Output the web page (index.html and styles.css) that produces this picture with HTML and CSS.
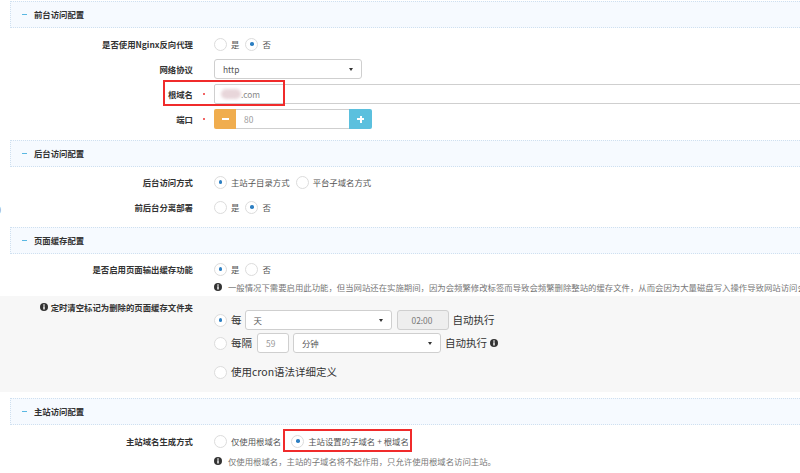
FILE: index.html
```html
<!DOCTYPE html>
<html lang="zh-CN">
<head>
<meta charset="utf-8">
<title>配置</title>
<link rel="stylesheet" href="styles.css">
</head>
<body>
<div class="page">

  <div class="head"><span class="dash"></span>前台访问配置</div>
  <div class="rows s1">
    <div class="row">
      <div class="label"><span>是否使用Nginx反向代理</span><span class="req"></span></div>
      <div class="ctrl">
        <span class="opt"><span class="radio"></span>是</span>
        <span class="opt"><span class="radio on"></span>否</span>
      </div>
    </div>
    <div class="row">
      <div class="label"><span>网络协议</span><span class="req"></span></div>
      <div class="ctrl">
        <div class="select w148"><span>http</span><span class="caret"></span></div>
      </div>
    </div>
    <div class="row">
      <div class="label"><span>根域名</span><span class="req dot"></span></div>
      <div class="ctrl">
        <div class="input wide"><span class="blur"></span><span class="val">.com</span></div>
      </div>
    </div>
    <div class="row">
      <div class="label"><span>端口</span><span class="req dot"></span></div>
      <div class="ctrl">
        <div class="spinner">
          <span class="btn minus"><span class="bar"></span></span>
          <span class="spin-input">80</span>
          <span class="btn plus"><span class="bar"></span><span class="bar v"></span></span>
        </div>
      </div>
    </div>
  </div>

  <div class="head"><span class="dash"></span>后台访问配置</div>
  <div class="rows s2">
    <div class="row">
      <div class="label"><span>后台访问方式</span><span class="req"></span></div>
      <div class="ctrl">
        <span class="opt"><span class="radio on"></span>主站子目录方式</span>
        <span class="opt"><span class="radio"></span>平台子域名方式</span>
      </div>
    </div>
    <div class="row">
      <div class="label"><span>前后台分离部署</span><span class="req"></span></div>
      <div class="ctrl">
        <span class="opt"><span class="radio"></span>是</span>
        <span class="opt"><span class="radio on"></span>否</span>
      </div>
    </div>
  </div>

  <div class="head"><span class="dash"></span>页面缓存配置</div>
  <div class="rows s3">
    <div class="row">
      <div class="label"><span>是否启用页面输出缓存功能</span><span class="req"></span></div>
      <div class="ctrl">
        <span class="opt"><span class="radio on"></span>是</span>
        <span class="opt"><span class="radio"></span>否</span>
      </div>
    </div>
    <div class="help">
      <svg class="info" viewBox="0 0 10 10"><circle cx="5" cy="5" r="5" fill="#333"/><circle cx="5" cy="2.6" r="1" fill="#fff"/><rect x="4.1" y="4.1" width="1.8" height="4" fill="#fff"/></svg>
      <span>一般情况下需要启用此功能，但当网站还在实施期间，因为会频繁修改标签而导致会频繁删除整站的缓存文件，从而会因为大量磁盘写入操作导致网站访问会比较缓慢。</span>
    </div>
  </div>

  <div class="gray">
    <div class="label top">
      <span class="lbl-i"><svg class="info" viewBox="0 0 10 10"><circle cx="5" cy="5" r="5" fill="#333"/><circle cx="5" cy="2.6" r="1" fill="#fff"/><rect x="4.1" y="4.1" width="1.8" height="4" fill="#fff"/></svg>定时清空标记为删除的页面缓存文件夹</span><span class="req"></span>
    </div>
    <div class="sched">
      <div class="srow">
        <span class="radio on"></span>
        <span class="big t1">每</span>
        <div class="select w147"><span>天</span><span class="caret"></span></div>
        <span class="time">02:00</span>
        <span class="big">自动执行</span>
      </div>
      <div class="srow r2">
        <span class="radio"></span>
        <span class="big t1">每隔</span>
        <span class="num">59</span>
        <div class="select w148 ml4"><span>分钟</span><span class="caret"></span></div>
        <span class="big">自动执行</span>
        <svg class="info big-i" viewBox="0 0 10 10"><circle cx="5" cy="5" r="5" fill="#333"/><circle cx="5" cy="2.6" r="1" fill="#fff"/><rect x="4.1" y="4.1" width="1.8" height="4" fill="#fff"/></svg>
      </div>
      <div class="srow r3">
        <span class="radio"></span>
        <span class="big t1">使用cron语法详细定义</span>
      </div>
    </div>
  </div>

  <div class="head"><span class="dash"></span>主站访问配置</div>
  <div class="rows s4">
    <div class="row">
      <div class="label"><span>主站域名生成方式</span><span class="req"></span></div>
      <div class="ctrl">
        <span class="opt"><span class="radio"></span>仅使用根域名</span>
        <span class="opt o2"><span class="radio on"></span>主站设置的子域名 + 根域名</span>
      </div>
    </div>
    <div class="help">
      <svg class="info" viewBox="0 0 10 10"><circle cx="5" cy="5" r="5" fill="#333"/><circle cx="5" cy="2.6" r="1" fill="#fff"/><rect x="4.1" y="4.1" width="1.8" height="4" fill="#fff"/></svg>
      <span>仅使用根域名，主站的子域名将不起作用，只允许使用根域名访问主站。</span>
    </div>
  </div>
</div>

<span class="edge">0</span>
<div class="mark m1"></div>
<div class="mark m2"></div>
</body>
</html>
```

FILE: styles.css
```css
* { box-sizing: border-box; }

html, body {
  margin: 0;
  width: 800px;
  height: 473px;
  overflow: hidden;
}

body {
  position: relative;
  background: #fff;
  color: #333;
  font-family: "Noto Sans CJK SC", "Noto Sans", sans-serif;
  font-size: 8.4px;
  line-height: 1.2;
}

.page {
  width: 1100px;
  padding-top: 1px;
}

.head {
  margin-left: 10px;
  height: 27px;
  background: #f6faff;
  border: 1px dotted #cfe0f0;
  border-right: none;
  display: flex;
  align-items: center;
  padding-left: 11px;
  font-weight: bold;
  color: #333;
}

.head .dash {
  width: 5px;
  height: 1px;
  background: #5ab8e2;
  margin-right: 7px;
}

.rows {
  display: flex;
  flex-direction: column;
  gap: 5px;
}
.s1 { padding: 6px 0 11px; }
.s2 { padding: 5px 0 10px; }
.s3 { padding: 5px 0 3px; gap: 2px; }
.s4 { padding: 6px 0 0; gap: 4px; }

.row {
  display: flex;
  align-items: center;
  height: 20px;
}

.label {
  width: 214px;
  flex: none;
  display: flex;
  justify-content: flex-end;
  align-items: center;
  font-weight: bold;
  color: #333;
}

.req {
  width: 21px;
  display: flex;
  justify-content: center;
  align-items: center;
}
.req.dot::before {
  content: "";
  width: 2px;
  height: 2px;
  border-radius: 50%;
  background: #e33;
}

.ctrl {
  display: flex;
  align-items: center;
}

.opt {
  display: flex;
  align-items: center;
  color: #555;
  margin-right: 6px;
}
.opt.o2 { margin-left: 4px; }

.radio {
  width: 13px;
  height: 13px;
  border: 1px solid #dcdcdc;
  border-radius: 50%;
  background: #fff;
  margin-right: 4px;
  display: flex;
  align-items: center;
  justify-content: center;
  flex: none;
}
.radio.on::before {
  content: "";
  width: 3.5px;
  height: 3.5px;
  border-radius: 50%;
  background: #2d7fc2;
}

.select {
  height: 20px;
  border: 1px solid #cfcfcf;
  border-radius: 3px;
  background: #fff;
  display: flex;
  align-items: center;
  justify-content: space-between;
  padding: 0 8px 0 8px;
  color: #555;
  font-weight: normal;
}
.w148 { width: 148px; }
.w147 { width: 147px; }
.ml4 { margin-left: 4px; }

.caret {
  width: 0;
  height: 0;
  border-left: 2.5px solid transparent;
  border-right: 2.5px solid transparent;
  border-top: 3px solid #333;
}

.input {
  height: 20px;
  border: 1px solid #cfcfcf;
  border-radius: 2px;
  background: #fff;
  display: flex;
  align-items: center;
  padding-left: 6px;
  color: #777;
}
.input.wide { width: 700px; }

.blur {
  width: 20px;
  height: 10px;
  background: #e8d6da;
  border-radius: 5px;
  filter: blur(1.5px);
}
.val { color: #888; }

.spinner {
  display: flex;
  height: 20px;
}
.btn {
  width: 23px;
  height: 20px;
  display: flex;
  align-items: center;
  justify-content: center;
  position: relative;
}
.btn.minus {
  background: #f0ad4e;
  border-radius: 2px 0 0 2px;
  width: 22px;
}
.btn.plus {
  background: #5bc0de;
  border-radius: 0 2px 2px 0;
}
.bar {
  width: 7px;
  height: 2px;
  background: #fff;
}
.bar.v {
  position: absolute;
  width: 2px;
  height: 7px;
}
.spin-input {
  width: 113px;
  height: 20px;
  border-top: 1px solid #cfcfcf;
  border-bottom: 1px solid #cfcfcf;
  display: flex;
  align-items: center;
  padding-left: 8px;
  color: #999;
}

.help {
  display: flex;
  align-items: center;
  height: 12px;
  margin-left: 214px;
  color: #777;
  white-space: nowrap;
}
.info {
  width: 8px;
  height: 8px;
  margin-right: 6px;
  flex: none;
}

.gray {
  background: #f7f7f7;
  display: flex;
  align-items: flex-start;
  height: 96px;
  margin-bottom: 6px;
}
.label.top {
  padding-top: 6px;
}
.lbl-i {
  display: flex;
  align-items: center;
}
.lbl-i .info { margin-right: 3px; }

.sched {
  display: flex;
  flex-direction: column;
  padding-top: 14px;
}
.srow {
  display: flex;
  align-items: center;
  height: 20px;
}
.srow.r2 { margin-top: 3px; }
.srow.r3 { margin-top: 9px; }

.big {
  font-size: 10.5px;
  color: #333;
}
.t1 { margin-right: 3px; }

.time {
  width: 52px;
  height: 20px;
  margin-left: 5px;
  margin-right: 4px;
  border: 1px solid #cfcfcf;
  border-radius: 3px;
  background: #eee;
  display: flex;
  align-items: center;
  padding-left: 14px;
  color: #777;
}
.num {
  width: 32px;
  height: 20px;
  border: 1px solid #cfcfcf;
  border-radius: 3px;
  background: #fff;
  display: flex;
  align-items: center;
  padding-left: 8px;
  color: #999;
  margin-left: 2px;
}
.srow.r2 .select { margin-right: 4px; }
.big-i { margin-left: 3px; margin-right: 0; }

.edge {
  position: absolute;
  left: -5px;
  top: 203px;
  color: #999;
  font-size: 11px;
}

.mark {
  position: absolute;
  border: 2px solid #f02b2b;
}
.m1 { left: 163px; top: 80px; width: 122px; height: 26px; }
.m2 { left: 283px; top: 429px; width: 129px; height: 23px; }
```
